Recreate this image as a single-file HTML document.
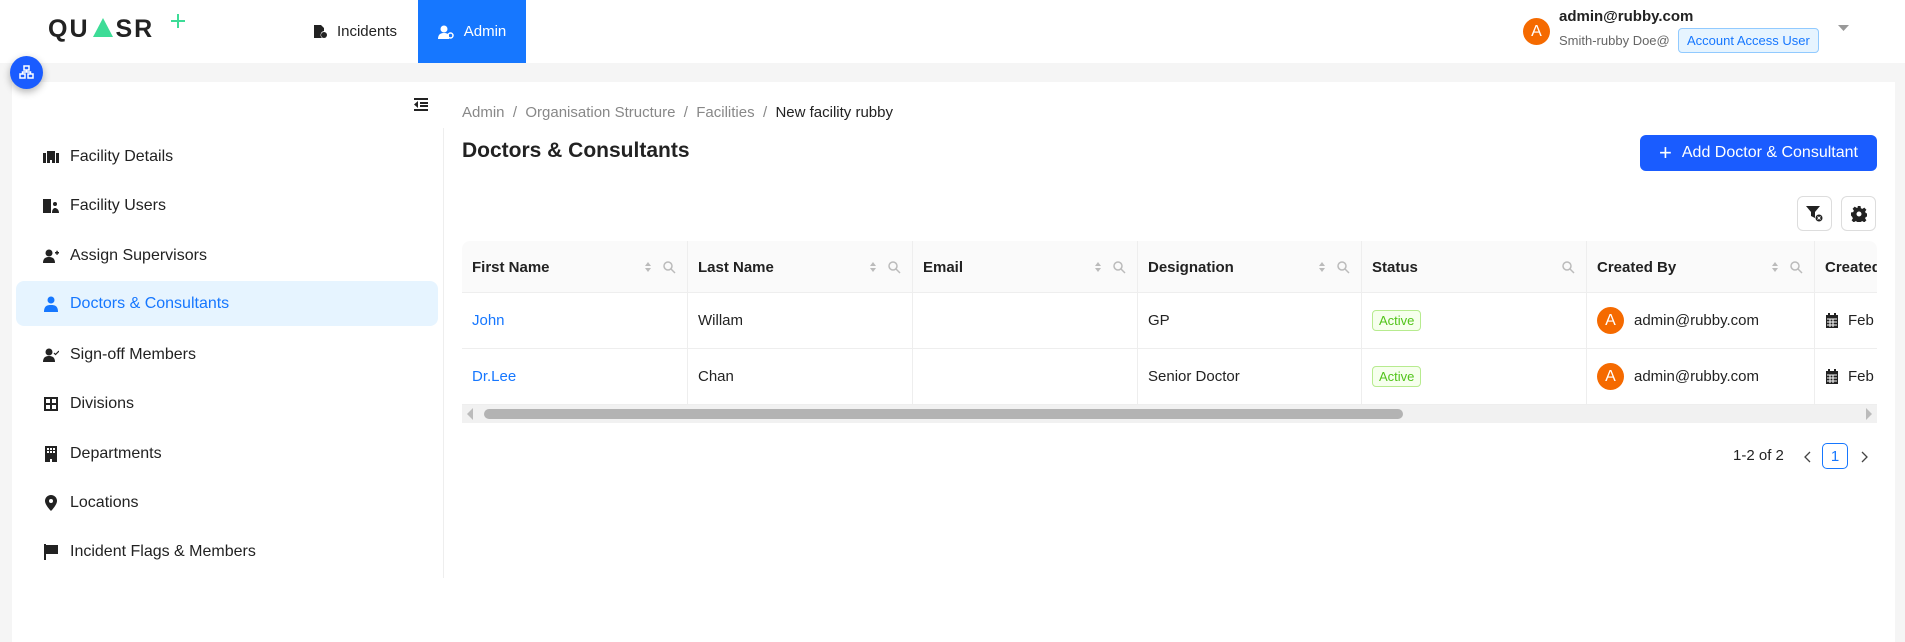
<!DOCTYPE html>
<html><head><meta charset="utf-8">
<style>
*{box-sizing:border-box;margin:0;padding:0}
body{width:1905px;height:637px;overflow:hidden;background:#f5f5f5;font-family:"Liberation Sans",sans-serif;color:#222;position:relative}
.a{position:absolute}
.hdr{left:0;top:0;width:1905px;height:63px;background:#fff}
.side-item{position:absolute;left:16px;width:422px;height:45px;display:flex;align-items:center;padding-left:27px;font-size:16px;color:#222;border-radius:8px}
.side-item svg{width:16px;height:16px;margin-right:11px;fill:#222;display:block;flex:none}
.side-item.act{background:#e6f4ff;color:#1677ff}
.side-item.act svg{fill:#1677ff}
.th{position:absolute;top:0;height:52px;display:flex;align-items:center;padding-left:10px;font-size:15px;font-weight:bold;color:#222;border-right:1px solid #eee}
.td{position:absolute;height:56px;display:flex;align-items:center;padding-left:10px;font-size:15px;color:#222;border-right:1px solid #eee;border-bottom:1px solid #eee}
.ic{position:absolute;top:19px;width:14px;height:14px}
.tag{border:1px solid #b7eb8f;background:#f6ffed;color:#52c41a;font-size:13px;padding:2px 6px;border-radius:4px}
.av{width:27px;height:27px;border-radius:50%;background:#f56a00;color:#fff;font-size:16px;display:flex;align-items:center;justify-content:center;margin-right:10px}
</style></head><body>
<div class="a hdr"></div>
<!-- logo -->
<div class="a" style="left:48px;top:15px;font-size:25px;font-weight:bold;letter-spacing:2px;color:#222">QU<span style="display:inline-block;width:0;height:0;border-left:10px solid transparent;border-right:10px solid transparent;border-bottom:19px solid #3ddc97;margin:0 3px"></span>SR</div>
<svg class="a" style="left:170px;top:13px" width="16" height="16"><path d="M8 1V15M1 8H15" stroke="#3ddc97" stroke-width="2"/></svg>
<!-- tabs -->
<div class="a" style="left:292px;top:0;width:126px;height:63px;display:flex;align-items:center;justify-content:center;font-size:15px;color:#222">
<svg width="14" height="15" style="margin-right:10px"><path d="M1 1h7l3 3v3a4 4 0 0 0-2 7H1z" fill="#222"/><circle cx="11" cy="11" r="3" fill="#222"/></svg>Incidents</div>
<div class="a" style="left:418px;top:0;width:108px;height:63px;background:#1677ff;color:#fff;display:flex;align-items:center;justify-content:center;font-size:15px">
<svg width="16" height="14" style="margin-right:10px"><circle cx="6" cy="4" r="3.5" fill="#fff"/><path d="M0 14c0-5 3-6 6-6s4 1 5 2v4z" fill="#fff"/><circle cx="12.5" cy="10.5" r="2.5" fill="none" stroke="#fff" stroke-width="1.5"/></svg>Admin</div>
<!-- user -->
<div class="a av" style="left:1523px;top:18px;width:27px;height:27px">A</div>
<div class="a" style="left:1559px;top:8px;font-size:15px;font-weight:bold;color:#222">admin@rubby.com</div>
<div class="a" style="left:1559px;top:33px;font-size:13px;color:#666">Smith-rubby Doe@</div>
<div class="a" style="left:1678px;top:28px;height:25px;padding:0 8px;border:1px solid #91caff;background:#e6f4ff;color:#1677ff;font-size:13px;border-radius:4px;display:flex;align-items:center">Account Access User</div>
<svg class="a" style="left:1838px;top:25px" width="11" height="7"><path d="M0 0h11L5.5 6z" fill="#999"/></svg>
<!-- card -->
<div class="a" style="left:12px;top:82px;width:1883px;height:560px;background:#fff"></div>
<div class="a" style="left:443px;top:128px;width:1px;height:450px;background:#eee"></div>
<!-- fab -->
<div class="a" style="left:10px;top:56px;width:33px;height:33px;border-radius:50%;background:#1a5cff;box-shadow:0 3px 8px rgba(0,0,0,.3)"></div>
<svg class="a" style="left:19px;top:65px" width="15" height="15"><g fill="none" stroke="#fff" stroke-width="1.5"><rect x="5" y="1" width="5" height="4"/><rect x="1" y="9" width="5" height="4"/><rect x="9" y="9" width="5" height="4"/><path d="M7.5 5v2M3.5 9V7h8v2"/></g></svg>
<!-- collapse icon -->
<svg class="a" style="left:414px;top:98px" width="14" height="13"><path d="M0 0h14v2H0zM6 4h8v2H6zM6 7h8v2H6zM0 11h14v2H0zM4 3v7L0 6.5z" fill="#222"/></svg>
<!-- sidebar -->
<div class="side-item" style="top:134px"><svg viewBox="0 0 16 16"><path d="M0 4h3v10H0zM4 2h8v12h-3v-3H7v3H4zM13 4h3v10h-3z"/></svg>Facility Details</div>
<div class="side-item" style="top:183px"><svg viewBox="0 0 16 16"><path d="M0 1h8v14H0zM10 6a2 2 0 1 1 4 0a2 2 0 1 1-4 0M9 15c0-4 2-5 3-5s4 1 4 5z"/></svg>Facility Users</div>
<div class="side-item" style="top:233px"><svg viewBox="0 0 16 16"><circle cx="6" cy="5" r="3.5"/><path d="M0 15c0-5 3-6 6-6s6 1 6 6zM12 4h4v1.5h-4zM13.3 2.7h1.5v4h-1.5z"/></svg>Assign Supervisors</div>
<div class="side-item act" style="top:281px"><svg viewBox="0 0 16 16"><circle cx="8" cy="4" r="3.5"/><path d="M1 16c0-6 3-7 7-7s7 1 7 7z"/></svg>Doctors &amp; Consultants</div>
<div class="side-item" style="top:332px"><svg viewBox="0 0 16 16"><circle cx="6" cy="5" r="3.5"/><path d="M0 15c0-5 3-6 6-6s6 1 6 6z"/><path d="M11 6l1.5 1.5L16 4" stroke="#222" fill="none" stroke-width="1.2"/></svg>Sign-off Members</div>
<div class="side-item" style="top:381px"><svg viewBox="0 0 16 16"><path d="M1 1h14v14H1zM3 3v4h4V3zM9 3v4h4V3zM3 9v4h4V9zM9 9v4h4V9z" fill-rule="evenodd"/></svg>Divisions</div>
<div class="side-item" style="top:431px"><svg viewBox="0 0 16 16"><path d="M2 0h12v16H9v-3H7v3H2zM4 2v2h2V2zM7 2v2h2V2zM10 2v2h2V2zM4 5v2h2V5zM7 5v2h2V5zM10 5v2h2V5z" fill-rule="evenodd"/></svg>Departments</div>
<div class="side-item" style="top:480px"><svg viewBox="0 0 16 16"><path d="M8 0a6 6 0 0 1 6 6c0 4-6 10-6 10S2 10 2 6a6 6 0 0 1 6-6zm0 4a2 2 0 1 0 0 4a2 2 0 0 0 0-4z" fill-rule="evenodd"/></svg>Locations</div>
<div class="side-item" style="top:529px"><svg viewBox="0 0 16 16"><path d="M1 0h2v16H1zM3 1h12v9H3z"/></svg>Incident Flags &amp; Members</div>
<!-- breadcrumb -->
<div class="a" style="left:462px;top:104px;font-size:15px;color:#888">Admin &nbsp;/&nbsp; Organisation Structure &nbsp;/&nbsp; Facilities &nbsp;/&nbsp; <span style="color:#222">New facility rubby</span></div>
<div class="a" style="left:462px;top:139px;font-size:21px;font-weight:bold;color:#222">Doctors &amp; Consultants</div>
<div class="a" style="left:1640px;top:135px;width:237px;height:36px;background:#1a5cff;border-radius:6px;color:#fff;font-size:16px;display:flex;align-items:center;justify-content:center"><span style="font-size:22px;margin-right:10px;font-weight:300">+</span>Add Doctor &amp; Consultant</div>
<div class="a" style="left:1797px;top:196px;width:35px;height:35px;border:1px solid #ddd;border-radius:6px"></div>
<svg class="a" style="left:1806px;top:205px" width="17" height="17"><path d="M0 1h14L9 7v6L5 11V7z" fill="#222"/><circle cx="13" cy="13" r="3.5" fill="#222"/><path d="M11.5 11.5l3 3M14.5 11.5l-3 3" stroke="#fff" stroke-width="1"/></svg>
<div class="a" style="left:1841px;top:196px;width:35px;height:35px;border:1px solid #ddd;border-radius:6px"></div>
<svg class="a" style="left:1851px;top:206px" width="16" height="16" viewBox="0 0 16 16"><path d="M6.5 0h3l.4 2.2 1.5.7 1.9-1.3 2.1 2.1-1.3 1.9.7 1.5 2.2.4v3l-2.2.4-.7 1.5 1.3 1.9-2.1 2.1-1.9-1.3-1.5.7-.4 2.2h-3l-.4-2.2-1.5-.7-1.9 1.3-2.1-2.1 1.3-1.9-.7-1.5L0 9.5v-3l2.2-.4.7-1.5-1.3-1.9 2.1-2.1 1.9 1.3 1.5-.7zM8 5.5a2.5 2.5 0 1 0 0 5a2.5 2.5 0 0 0 0-5z" fill="#222" fill-rule="evenodd"/></svg>
<!-- table -->
<div class="a" style="left:462px;top:241px;width:1415px;height:182px;overflow:hidden;border-radius:8px 8px 0 0">
<div class="a" style="left:0;top:0;width:1415px;height:52px;background:#fafafa;border-bottom:1px solid #eee"></div>
<div class="th" style="left:0;width:226px">First Name</div>
<div class="th" style="left:226px;width:225px">Last Name</div>
<div class="th" style="left:451px;width:225px">Email</div>
<div class="th" style="left:676px;width:224px">Designation</div>
<div class="th" style="left:900px;width:225px">Status</div>
<div class="th" style="left:1125px;width:228px">Created By</div>
<div class="th" style="left:1353px;width:100px;border:none">Created</div>
<svg class="ic" style="left:180px" viewBox="0 0 14 14"><path d="M3 6l3-4 3 4zM3 8l3 4 3-4z" fill="#bbb"/></svg><svg class="ic" style="left:200px" viewBox="0 0 14 14"><circle cx="6" cy="6" r="4" fill="none" stroke="#bbb" stroke-width="1.5"/><path d="M9 9l4 4" stroke="#bbb" stroke-width="1.5"/></svg>
<svg class="ic" style="left:405px" viewBox="0 0 14 14"><path d="M3 6l3-4 3 4zM3 8l3 4 3-4z" fill="#bbb"/></svg><svg class="ic" style="left:425px" viewBox="0 0 14 14"><circle cx="6" cy="6" r="4" fill="none" stroke="#bbb" stroke-width="1.5"/><path d="M9 9l4 4" stroke="#bbb" stroke-width="1.5"/></svg>
<svg class="ic" style="left:630px" viewBox="0 0 14 14"><path d="M3 6l3-4 3 4zM3 8l3 4 3-4z" fill="#bbb"/></svg><svg class="ic" style="left:650px" viewBox="0 0 14 14"><circle cx="6" cy="6" r="4" fill="none" stroke="#bbb" stroke-width="1.5"/><path d="M9 9l4 4" stroke="#bbb" stroke-width="1.5"/></svg>
<svg class="ic" style="left:854px" viewBox="0 0 14 14"><path d="M3 6l3-4 3 4zM3 8l3 4 3-4z" fill="#bbb"/></svg><svg class="ic" style="left:874px" viewBox="0 0 14 14"><circle cx="6" cy="6" r="4" fill="none" stroke="#bbb" stroke-width="1.5"/><path d="M9 9l4 4" stroke="#bbb" stroke-width="1.5"/></svg>
<svg class="ic" style="left:1099px" viewBox="0 0 14 14"><circle cx="6" cy="6" r="4" fill="none" stroke="#bbb" stroke-width="1.5"/><path d="M9 9l4 4" stroke="#bbb" stroke-width="1.5"/></svg>
<svg class="ic" style="left:1307px" viewBox="0 0 14 14"><path d="M3 6l3-4 3 4zM3 8l3 4 3-4z" fill="#bbb"/></svg><svg class="ic" style="left:1327px" viewBox="0 0 14 14"><circle cx="6" cy="6" r="4" fill="none" stroke="#bbb" stroke-width="1.5"/><path d="M9 9l4 4" stroke="#bbb" stroke-width="1.5"/></svg>
<!-- row1 -->
<div class="td" style="top:52px;left:0;width:226px;color:#1677ff">John</div>
<div class="td" style="top:52px;left:226px;width:225px">Willam</div>
<div class="td" style="top:52px;left:451px;width:225px"></div>
<div class="td" style="top:52px;left:676px;width:224px">GP</div>
<div class="td" style="top:52px;left:900px;width:225px"><span class="tag">Active</span></div>
<div class="td" style="top:52px;left:1125px;width:228px"><div class="av">A</div>admin@rubby.com</div>
<div class="td" style="top:52px;left:1353px;width:100px;border-right:none"><svg width="14" height="15" style="margin-right:9px"><path d="M1 2h12v13H1zM3 0h2v3H3zM9 0h2v3H9z" fill="#222"/><path d="M2 6h10M2 9h10M2 12h10M5 6v8M8 6v8" stroke="#fff" stroke-width="1"/></svg>Feb</div>
<!-- row2 -->
<div class="td" style="top:108px;left:0;width:226px;color:#1677ff">Dr.Lee</div>
<div class="td" style="top:108px;left:226px;width:225px">Chan</div>
<div class="td" style="top:108px;left:451px;width:225px"></div>
<div class="td" style="top:108px;left:676px;width:224px">Senior Doctor</div>
<div class="td" style="top:108px;left:900px;width:225px"><span class="tag">Active</span></div>
<div class="td" style="top:108px;left:1125px;width:228px"><div class="av">A</div>admin@rubby.com</div>
<div class="td" style="top:108px;left:1353px;width:100px;border-right:none"><svg width="14" height="15" style="margin-right:9px"><path d="M1 2h12v13H1zM3 0h2v3H3zM9 0h2v3H9z" fill="#222"/><path d="M2 6h10M2 9h10M2 12h10M5 6v8M8 6v8" stroke="#fff" stroke-width="1"/></svg>Feb</div>
<!-- scrollbar -->
<div class="a" style="left:0;top:164px;width:1415px;height:18px;background:#f1f1f1"></div>
<div class="a" style="left:22px;top:168px;width:919px;height:10px;background:#b3b3b3;border-radius:5px"></div>
<svg class="a" style="left:4px;top:167px" width="8" height="12"><path d="M7 0v12L1 6z" fill="#bbb"/></svg>
<svg class="a" style="left:1403px;top:167px" width="8" height="12"><path d="M1 0v12l6-6z" fill="#bbb"/></svg>
</div>
<!-- pagination -->
<div class="a" style="left:1733px;top:447px;font-size:15px;color:#222">1-2 of 2</div>
<svg class="a" style="left:1804px;top:451px" width="8" height="12"><path d="M6 1L1 6l5 5" stroke="#444" stroke-width="1.3" fill="none"/></svg>
<div class="a" style="left:1822px;top:443px;width:26px;height:26px;border:1px solid #1677ff;border-radius:5px;color:#1677ff;font-size:15px;display:flex;align-items:center;justify-content:center">1</div>
<svg class="a" style="left:1860px;top:451px" width="8" height="12"><path d="M2 1l5 5-5 5" stroke="#444" stroke-width="1.3" fill="none"/></svg>
</body></html>
